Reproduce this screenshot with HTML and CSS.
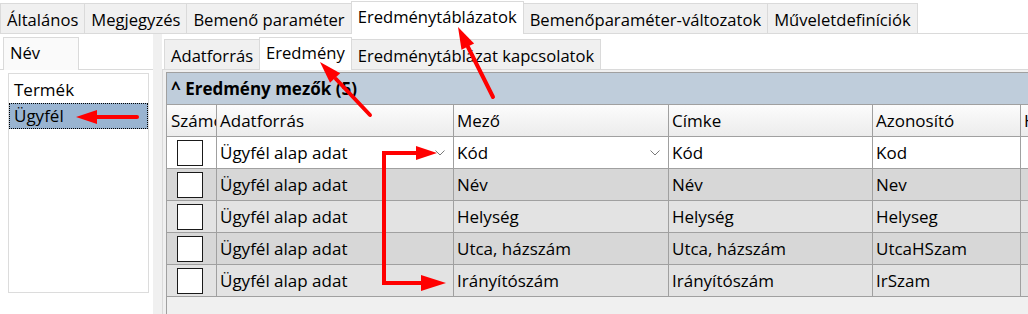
FILE: index.html
```html
<!DOCTYPE html>
<html lang="hu">
<head>
    <meta charset="UTF-8">
    <title>Eredménytáblázatok</title>
    <link rel="stylesheet" href="styles.css">
</head>
<body>
    <div class="tabs top-tabs">
        <div class="tab">Általános</div>
        <div class="tab">Megjegyzés</div>
        <div class="tab">Bemenő paraméter</div>
        <div class="tab active">Eredménytáblázatok</div>
        <div class="tab">Bemenőparaméter-változatok</div>
        <div class="tab">Műveletdefiníciók</div>
    </div>

    <div class="main">
        <div class="left">
            <div class="tabs sub-tabs">
                <div class="tab active">Név</div>
            </div>
            <div class="list">
                <div class="item">Termék</div>
                <div class="item selected">Ügyfél</div>
            </div>
        </div>

        <div class="splitter"></div>

        <div class="right">
            <div class="tabs sub-tabs">
                <div class="tab">Adatforrás</div>
                <div class="tab active">Eredmény</div>
                <div class="tab">Eredménytáblázat kapcsolatok</div>
            </div>
            <div class="pane">
                <div class="grid">
                    <div class="group">^ Eredmény mezők (5)</div>
                    <div class="row head">
                        <div class="cell">Számolt</div>
                        <div class="cell">Adatforrás</div>
                        <div class="cell">Mező</div>
                        <div class="cell">Címke</div>
                        <div class="cell">Azonosító</div>
                        <div class="cell">Hossz</div>
                    </div>
                    <div class="row current">
                        <div class="cell check"><span class="box"></span></div>
                        <div class="cell combo">Ügyfél alap adat
                            <svg class="chevron" width="10" height="6" viewBox="0 0 10 6"><polyline points="0.5,0.5 5,5 9.5,0.5"/></svg>
                        </div>
                        <div class="cell combo">Kód
                            <svg class="chevron" width="10" height="6" viewBox="0 0 10 6"><polyline points="0.5,0.5 5,5 9.5,0.5"/></svg>
                        </div>
                        <div class="cell">Kód</div>
                        <div class="cell">Kod</div>
                        <div class="cell"></div>
                    </div>
                    <div class="row dark">
                        <div class="cell check"><span class="box"></span></div>
                        <div class="cell">Ügyfél alap adat</div>
                        <div class="cell">Név</div>
                        <div class="cell">Név</div>
                        <div class="cell">Nev</div>
                        <div class="cell"></div>
                    </div>
                    <div class="row light">
                        <div class="cell check"><span class="box"></span></div>
                        <div class="cell">Ügyfél alap adat</div>
                        <div class="cell">Helység</div>
                        <div class="cell">Helység</div>
                        <div class="cell">Helyseg</div>
                        <div class="cell"></div>
                    </div>
                    <div class="row dark">
                        <div class="cell check"><span class="box"></span></div>
                        <div class="cell">Ügyfél alap adat</div>
                        <div class="cell">Utca, házszám</div>
                        <div class="cell">Utca, házszám</div>
                        <div class="cell">UtcaHSzam</div>
                        <div class="cell"></div>
                    </div>
                    <div class="row light">
                        <div class="cell check"><span class="box"></span></div>
                        <div class="cell">Ügyfél alap adat</div>
                        <div class="cell">Irányítószám</div>
                        <div class="cell">Irányítószám</div>
                        <div class="cell">IrSzam</div>
                        <div class="cell"></div>
                    </div>
                </div>
            </div>
        </div>
    </div>

    <!-- piros jelölő nyilak a kép fölött -->
    <svg class="arrows" width="1028" height="314" viewBox="0 0 1028 314">
        <line x1="137" y1="117" x2="95" y2="117"/>
        <polygon points="76,117 97,110 97,124"/>

        <line x1="370" y1="115" x2="336" y2="79"/>
        <polygon points="320,62 340.2,73.2 330,82.8"/>

        <line x1="493" y1="97" x2="468" y2="47"/>
        <polygon points="458,27 474.1,43.6 461.5,49.8"/>

        <polyline class="bracket" points="418,153 384,153 384,283 424,283"/>
        <polygon points="437,153 416,146 416,160"/>
        <polygon points="446,283 421,275 421,291"/>
    </svg>
</body>
</html>
```

FILE: styles.css
```css
body {
    margin: 0;
    width: 1028px;
    height: 314px;
    overflow: hidden;
    position: relative;
    background-color: #fff;
    font-family: "Open Sans", "Noto Sans", sans-serif;
    font-size: 17px;
    color: #000;
}

/* fülek */
.tabs {
    display: flex;
    align-items: flex-end;
    border-bottom: 1px solid #dadada;
    background-color: #fff;
}
.top-tabs {
    height: 33px;
    padding-left: 1px;
}
.sub-tabs {
    height: 35px;
    padding-left: 3px;
}
.tab {
    height: 26px;
    line-height: 26px;
    padding: 3px 6px 0;
    margin-left: -1px;
    border: 1px solid #dadada;
    border-bottom: none;
    background-color: #f0f0f0;
    white-space: nowrap;
    font-size: 16.6px;
}
.tab.active {
    height: 28px;
    padding: 2px 6px 2px;
    margin-bottom: -1px;
    background-color: #fff;
    position: relative;
}

.main {
    display: flex;
    height: 280px;
}

/* bal oldali lista */
.left {
    width: 153px;
    flex-shrink: 0;
    background-color: #fff;
}
.left .sub-tabs {
    padding-left: 4px;
}
.left .tab.active {
    width: 62px;
    background-color: #fafafa;
}
.list {
    margin: 3px 0 0 8px;
    width: 141px;
    height: 220px;
    box-sizing: border-box;
    border: 1px solid #dcdcdc;
    padding-top: 3px;
}
.item {
    height: 26px;
    line-height: 26px;
    padding-left: 5px;
}
.item.selected {
    background-color: #99b4d1;
    border: 1px dotted #000;
    height: 24px;
    line-height: 24px;
    padding-left: 4px;
}

.splitter {
    width: 9px;
    flex-shrink: 0;
    background-color: #f0f0f0;
}

/* jobb oldal */
.right {
    flex: 1;
    min-width: 0;
    display: flex;
    flex-direction: column;
}
.pane {
    flex: 1;
    background-color: #f0f0f0;
    border-left: 1px solid #dadada;
    padding: 2px 0 0 3px;
    overflow: hidden;
}
.grid {
    height: 100%;
    width: 920px;
    border-left: 1px solid #a0a0a0;
    border-top: 1px solid #a0a0a0;
}
.group {
    height: 31px;
    line-height: 31px;
    padding-left: 4px;
    background-color: #bfcddb;
    border-bottom: 1px solid #a0a0a0;
    font-weight: bold;
    font-size: 17px;
}
.row {
    display: grid;
    grid-template-columns: 50px 237px 215px 204px 148px 60px;
    height: 32px;
}
.cell {
    box-sizing: border-box;
    border-right: 1px solid #a0a0a0;
    border-bottom: 1px solid #a0a0a0;
    line-height: 31px;
    padding-left: 3px;
    white-space: nowrap;
    overflow: hidden;
}
.head .cell {
    background: linear-gradient(#fcfcfc, #ececec);
}
.head .cell:first-child {
    padding-left: 4px;
}
.current .cell {
    background-color: #fff;
}
.dark .cell {
    background-color: #d7d7d7;
}
.light .cell {
    background-color: #e3e3e3;
}
.check {
    display: flex;
    align-items: center;
    padding-left: 10px;
}
.box {
    width: 24px;
    height: 24px;
    background-color: #fff;
    border: 1px solid #1a1a1a;
}
.combo {
    display: flex;
    align-items: center;
    justify-content: space-between;
    padding-right: 8px;
}
.chevron polyline {
    fill: none;
    stroke: #7a7a7a;
    stroke-width: 1;
}

/* jelölések */
.arrows {
    position: absolute;
    top: 0;
    left: 0;
    pointer-events: none;
}
.arrows line,
.arrows polyline {
    stroke: #f00;
    stroke-width: 4;
    stroke-linecap: round;
    fill: none;
}
.arrows .bracket {
    stroke-linecap: butt;
    stroke-linejoin: miter;
}
.arrows polygon {
    fill: #f00;
}
```
